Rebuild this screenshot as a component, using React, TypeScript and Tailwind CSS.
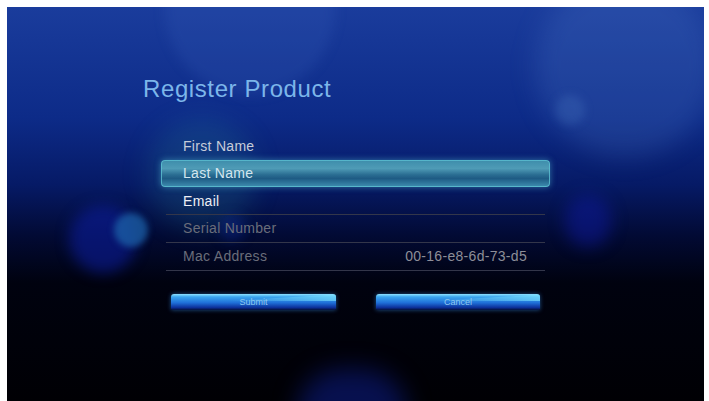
import React from 'react';

const rows = [
  { label: 'First Name', color: 'text-[#c6ccd9]', h: 'h-[27px]' },
  { label: 'Last Name', color: 'text-[#d3e6ef]', h: 'h-[27px]', active: true },
  { label: 'Email', color: 'text-[#eceef5]', h: 'h-[27px]', line: true },
  { label: 'Serial Number', color: 'text-[#6a6d7a]', h: 'h-[28px]', line: true },
  { label: 'Mac Address', color: 'text-[#6a6d7a]', h: 'h-[28px]', line: true, value: '00-16-e8-6d-73-d5' },
];

// soft out-of-focus lights behind the menu
function Bokeh() {
  return (
    <div className="pointer-events-none absolute inset-0">
      <div className="absolute left-[158px] top-[-82px] h-[170px] w-[170px] rounded-full bg-[#3a62c0]/20 blur-[6px]" />
      <div className="absolute left-[528px] top-[-30px] h-[180px] w-[180px] rounded-full bg-[#5a86d0]/20 blur-[12px]" />
      <div className="absolute left-[548px] top-[88px] h-[30px] w-[30px] rounded-full bg-[#4f7fc8]/25 blur-[4px]" />
      <div className="absolute left-[140px] top-[112px] h-[110px] w-[110px] rounded-full bg-[#2a8a9a]/20 blur-[12px]" />
      <div className="absolute left-[62px] top-[198px] h-[68px] w-[68px] rounded-full bg-[#0c1c9a]/60 blur-[7px]" />
      <div className="absolute left-[107px] top-[206px] h-[34px] w-[34px] rounded-full bg-[#1c62a8]/75 blur-[3px]" />
      <div className="absolute left-[212px] top-[208px] h-[26px] w-[26px] rounded-full bg-[#0e2a9a]/40 blur-[6px]" />
      <div className="absolute left-[558px] top-[188px] h-[52px] w-[46px] rounded-full bg-[#0d1aa0]/50 blur-[8px]" />
      <div className="absolute left-[290px] top-[362px] h-[90px] w-[110px] rounded-full bg-[#0c1a80]/60 blur-[12px]" />
    </div>
  );
}

function GlossButton({ label, width }: { label: string; width: string }) {
  return (
    <div
      className={`relative flex h-[16px] ${width} items-center justify-center overflow-hidden rounded-t-[3px] rounded-b-[1px] bg-[linear-gradient(to_bottom,#8fe2ff_0%,#3aa6ee_18%,#1f6fd8_55%,#0c2f98_85%,#04113a_100%)] shadow-[0_0_4px_rgba(60,160,255,0.5)]`}
    >
      <div className="absolute right-[-10px] top-0 h-[7px] w-[120px] bg-[linear-gradient(to_right,transparent,#7fe6ff)] opacity-70 [clip-path:polygon(0_100%,100%_0,100%_100%)]" />
      <span className="relative text-[9px] leading-none text-[#8fcaf0]">{label}</span>
    </div>
  );
}

export default function App() {
  return (
    <div className="h-[401px] w-[709px] overflow-hidden bg-white pl-[7px] pr-[5px] pt-[7px] font-['Liberation_Sans',Arial,sans-serif]">
      <div className="relative h-[394px] w-full overflow-hidden bg-[linear-gradient(to_bottom,#1a3c9c_0%,#0d2b88_28%,#061a66_45%,#020a34_58%,#00020f_70%,#000004_100%)]">
        <Bokeh />

        <div className="relative pl-[136px] pt-[68px]">
          <h1 className="text-[24px] leading-[28px] tracking-[0.6px] text-[#7cb6ea]">Register Product</h1>

          <div className="ml-[18px] mt-[30px] flex w-[389px] flex-col">
            {rows.map((r) => (
              <div
                key={r.label}
                className={`flex items-center justify-between text-[14px] tracking-[0.3px] ${r.color} ${r.h} ${
                  r.active
                    ? 'h-[26px] mb-px rounded-[4px] border border-[#5cc0d2]/80 bg-[linear-gradient(to_bottom,#3f8eac_0%,#4f9bb6_30%,#2a6d92_55%,#1e5b84_70%,#3b88ac_100%)] pl-[21px] pr-[22px] shadow-[0_0_6px_rgba(90,200,220,0.5)]'
                    : r.line
                    ? 'mx-[5px] border-b border-[#33364a] pl-[17px] pr-[18px]'
                    : 'pl-[22px] pr-[23px]'
                }`}
              >
                <span>{r.label}</span>
                {r.value && <span className="text-[#8d8e98]">{r.value}</span>}
              </div>
            ))}
          </div>

          <div className="ml-[28px] mt-[23px] flex gap-[40px]">
            <GlossButton label="Submit" width="w-[165px]" />
            <GlossButton label="Cancel" width="w-[164px]" />
          </div>
        </div>
      </div>
    </div>
  );
}
